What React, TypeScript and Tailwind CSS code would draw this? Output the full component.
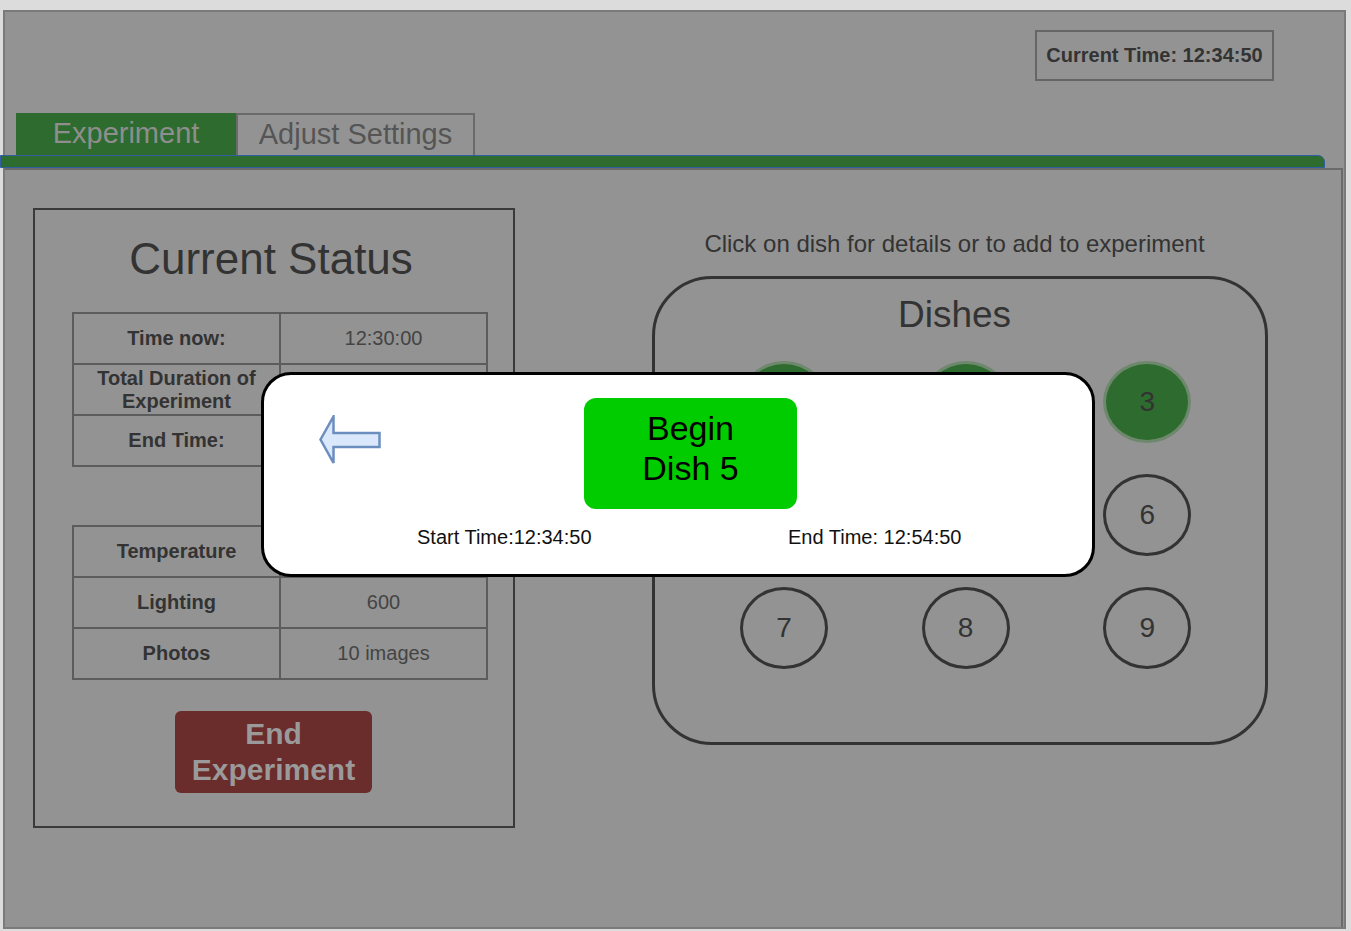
const font = "font-['Liberation_Sans',Arial,sans-serif]";

function Row({ label, value }: { label: React.ReactNode; value?: string }) {
  return (
    <tr className="h-[51px]">
      <td className="w-[207px] border-2 border-[#5c5c5c] text-center text-[20px] font-bold leading-[23px] text-[#333]">
        {label}
      </td>
      <td className="w-[207px] border-2 border-[#5c5c5c] text-center text-[20px] leading-[23px] text-[#444]">
        {value}
      </td>
    </tr>
  );
}

function Dish({ n, active }: { n: number; active?: boolean }) {
  return (
    <div
      className={
        active
          ? "flex h-[82px] w-[88px] items-center justify-center rounded-[50%] border-[3px] border-[#6d886d] bg-[#2e6b2e] text-[28px] text-[#333]"
          : "flex h-[82px] w-[88px] items-center justify-center rounded-[50%] border-[3px] border-[#333] text-[28px] text-[#333]"
      }
    >
      {n}
    </div>
  );
}

function BackArrow() {
  return (
    <svg width="62" height="50" viewBox="0 0 62 50">
      <polygon
        points="1.5,24.5 14.5,1.5 14.5,18 60.5,18 60.5,32 14.5,32 14.5,48"
        fill="#dae8fc"
        stroke="#6c8ebf"
        strokeWidth="2.5"
      />
    </svg>
  );
}

export default function App() {
  return (
    <div className={`relative h-[931px] w-[1351px] overflow-hidden bg-[#dcdcdc] pl-[3px] pt-[10px] ${font}`}>
      <div className="flex h-[919px] w-[1343px] flex-col border-2 border-[#7a7a7a] bg-[#939393]">
        {/* header */}
        <div className="flex justify-end pr-[70px] pt-[18px]">
          <div className="flex h-[51px] w-[239px] items-center justify-center border-2 border-[#666] pb-[1px] text-[20px] font-bold text-[#333]">
            Current Time: 12:34:50
          </div>
        </div>

        {/* tabs */}
        <div className="mt-[32px] flex pl-[11px]">
          <div className="flex h-[42px] w-[220px] items-center justify-center bg-[#2e6b2e] text-[29px] text-[#8e8e8e]">
            Experiment
          </div>
          <div className="flex h-[42px] w-[239px] items-center justify-center border-2 border-b-0 border-[#6a6a6a] text-[29px] text-[#555]">
            Adjust Settings
          </div>
        </div>
        <div className="-ml-[5px] h-[13px] w-[1325px] rounded-tr-[7px] border border-[#2f5fa0] bg-[#2e6b2e]" />

        {/* content */}
        <div className="flex w-[1338px] flex-1 border-r-2 border-t-2 border-[#6a6a6a]">
          <div className="ml-[28px] mt-[38px] flex h-[620px] w-[482px] flex-col items-start border-2 border-[#3a3a3a]">
            <div className="w-full pr-[6px] pt-[23px] text-center text-[44px] leading-[52px] text-[#333]">Current Status</div>
            <table className="ml-[37px] mt-[27px] w-[414px] table-fixed border-collapse">
              <tbody>
                <Row label="Time now:" value="12:30:00" />
                <Row
                  label={
                    <>
                      Total Duration of
                      <br />
                      Experiment
                    </>
                  }
                  value=""
                />
                <Row label="End Time:" value="" />
              </tbody>
            </table>
            <table className="ml-[37px] mt-[58px] w-[414px] table-fixed border-collapse">
              <tbody>
                <Row label="Temperature" value="" />
                <Row label="Lighting" value="600" />
                <Row label="Photos" value="10 images" />
              </tbody>
            </table>
            <div className="ml-[140px] mt-[31px] flex h-[82px] w-[197px] flex-col items-center justify-center rounded-[6px] bg-[#6b2c2c] text-[30px] font-bold leading-[36px] text-[#9a9a9a]">
              <span>End</span>
              <span>Experiment</span>
            </div>
          </div>

          <div className="ml-[137px] flex w-[616px] flex-col">
            <div className="mt-[60px] pr-[11px] text-center text-[24px] leading-[28px] text-[#333]">
              Click on dish for details or to add to experiment
            </div>
            <div className="mt-[18px] flex h-[469px] flex-col rounded-[60px] border-[3px] border-[#333]">
              <div className="pr-[11px] pt-[16px] text-center text-[37px] leading-[40px] text-[#333]">Dishes</div>
              <div className="ml-[85px] mt-[26px] grid w-[452px] grid-cols-3 gap-x-[93px] gap-y-[31px]">
                <Dish n={1} active />
                <Dish n={2} active />
                <Dish n={3} active />
                <Dish n={4} />
                <Dish n={5} />
                <Dish n={6} />
                <Dish n={7} />
                <Dish n={8} />
                <Dish n={9} />
              </div>
            </div>
          </div>
        </div>
      </div>

      {/* modal */}
      <div className="absolute left-[261px] top-[372px] flex h-[205px] w-[834px] flex-col rounded-[30px] border-[3px] border-black bg-white">
        <div className="flex items-start pl-[55px] pt-[23px]">
          <div className="mt-[17px]">
            <BackArrow />
          </div>
          <div className="ml-[203px] flex h-[111px] w-[213px] flex-col items-center justify-center rounded-[12px] bg-[#00cc00] pb-[12px] text-[34px] leading-[40px] text-black">
            <span>Begin</span>
            <span>Dish 5</span>
          </div>
        </div>
        <div className="relative mt-[17px] flex text-[20px] leading-[22px] text-[#111]">
          <span className="ml-[153px]">Start Time:12:34:50</span>
          <span className="absolute left-[524px]">End Time: 12:54:50</span>
        </div>
      </div>
    </div>
  );
}
